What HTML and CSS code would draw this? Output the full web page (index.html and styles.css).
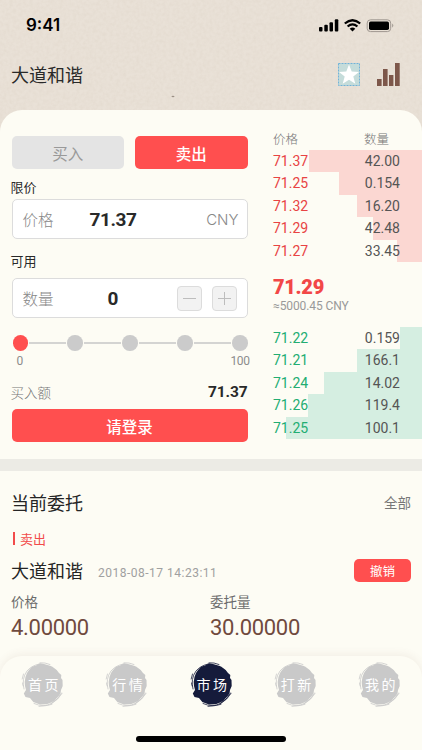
FILE: index.html
```html
<!DOCTYPE html>
<html lang="zh-CN">
<head>
    <meta charset="UTF-8">
    <meta name="viewport" content="width=device-width, initial-scale=1">
    <title>市场</title>
    <link rel="stylesheet" href="styles.css">
</head>
<body>
    <svg class="defs" width="0" height="0">
        <symbol id="ink" viewBox="0 0 44 46">
            <path fill="currentColor" d="M6 11 L8 8 L11 4.700 L15 3.500 L19 1.300 L23 2 L27.300 3.300 L31 4.500 L35.700 8 L38 11 L40.300 13 L40 16 L41.500 18 L41.700 24 L40 28 L39.600 31 L38.300 33.300 L35 37 L33.300 39 L29 41 L25.700 42.300 L19 42.500 L15 41 L12.300 40 L9 35.900 L4.500 35 L2.800 31.500 L5 28 L4 24 L3.700 20 L4.500 15 Z"/>
            <g fill="none" stroke="currentColor" stroke-linecap="round">
                <path stroke-width=".8" d="M3 27Q.3 17 6 9Q10 4 18 2M1.200 17L2.500 12M1.600 21L2.200 24"/>
                <path stroke-width=".8" d="M19 .8Q24 .3 29 2.500M13 41.500Q22 45.500 31 42.300M18 44.400Q33 44.500 41 31.500"/>
                <path stroke-width=".9" d="M30 41.600Q37 38 40.500 31"/>
            </g>
        </symbol>
    </svg>

    <div class="phone">
        <header class="header">
            <svg class="paper" width="422" height="140">
                <filter id="grain" x="0" y="0" width="100%" height="100%">
                    <feTurbulence type="fractalNoise" baseFrequency=".3" numOctaves="3" seed="4"/>
                    <feColorMatrix values="0 0 0 0 .55  0 0 0 0 .46  0 0 0 0 .36  .22 0 0 0 -.07"/>
                </filter>
                <rect width="422" height="140" filter="url(#grain)"/>
                <ellipse cx="173" cy="96.500" rx="1.500" ry=".8" fill="#9b9085"/>
            </svg>
            <div class="status-bar">
                <span class="time">9:41</span>
                <svg width="76" height="14" viewBox="0 0 76 14">
                    <rect x="0" y="8" width="3.500" height="4.500" rx="1"/>
                    <rect x="5.300" y="5.700" width="3.500" height="6.800" rx="1"/>
                    <rect x="10.500" y="3.200" width="3.500" height="9.300" rx="1"/>
                    <rect x="15.800" y=".3" width="3.500" height="12.200" rx="1"/>
                    <g fill="none" stroke="#000" stroke-width="2.300">
                        <path d="M25.800 4.500Q33.500-2.100 41.200 4.500"/>
                        <path d="M28.600 7.500Q33.500 3.300 38.400 7.500"/>
                    </g>
                    <path d="M30.700 9.700Q33.500 7.500 36.300 9.700L33.500 12.500Z"/>
                    <rect x="48.200" y=".8" width="23.500" height="11.800" rx="3.300" fill="none" stroke="#9f9790"/>
                    <rect x="50" y="2.500" width="20" height="8.400" rx="1.700"/>
                    <path d="M73.200 4.600Q75.500 6.600 73.200 8.700Z" fill="#9f9790"/>
                </svg>
            </div>
            <div class="title-bar">
                <h1>大道和谐</h1>
                <div class="tools">
                    <svg width="22" height="23" viewBox="0 0 22 23">
                        <rect x=".5" y=".5" width="21" height="22" fill="#c5dcda" stroke="#6fb3d9" stroke-dasharray="2 1"/>
                        <path fill="#fff" d="M11 1.500L13.700 8.500L21 8.900L15.300 13.500L17.300 20.800L11 16.800L4.700 20.800L6.700 13.500L1 8.900L8.300 8.500Z"/>
                    </svg>
                    <svg width="23" height="23" viewBox="0 0 23 23" fill="#7d574a">
                        <path d="M0 16h4.600v7H0zM6 6h4.600v17H6zM12 12h4.400v11H12zM18 0h4.700v23H18z"/>
                    </svg>
                </div>
            </div>
        </header>

        <main class="sheet">
            <section class="trade">
                <div class="form">
                    <div class="sides">
                        <button class="side">买入</button>
                        <button class="side active">卖出</button>
                    </div>
                    <label class="label">限价</label>
                    <div class="field price-field">
                        <span class="name">价格</span>
                        <b class="num">71.37</b>
                        <span class="unit">CNY</span>
                    </div>
                    <label class="label available">可用</label>
                    <div class="field amount-field">
                        <span class="name">数量</span>
                        <b class="num">0</b>
                        <div class="stepper">
                            <button class="step"><svg width="13" height="13"><path d="M0 6.500h13"/></svg></button>
                            <button class="step"><svg width="13" height="13"><path d="M0 6.500h13M6.500 0v13"/></svg></button>
                        </div>
                    </div>
                    <div class="slider">
                        <i class="dot on"></i><i class="line"></i><i class="dot"></i><i class="line"></i><i class="dot"></i><i class="line"></i><i class="dot"></i><i class="line"></i><i class="dot"></i>
                    </div>
                    <div class="scale num"><span>0</span><span>100</span></div>
                    <div class="total"><span>买入额</span><b class="num">71.37</b></div>
                    <button class="submit">请登录</button>
                </div>

                <div class="book">
                    <div class="book-head"><span>价格</span><span>数量</span></div>
                    <div class="rows sell num">
                        <div class="row"><i class="depth" style="width:113px"></i><span>71.37</span><span>42.00</span></div>
                        <div class="row"><i class="depth" style="width:83px"></i><span>71.25</span><span>0.154</span></div>
                        <div class="row"><i class="depth" style="width:65px"></i><span>71.32</span><span>16.20</span></div>
                        <div class="row"><i class="depth" style="width:49px"></i><span>71.29</span><span>42.48</span></div>
                        <div class="row"><i class="depth" style="width:25px"></i><span>71.27</span><span>33.45</span></div>
                    </div>
                    <div class="last num">
                        <b>71.29</b>
                        <span>≈5000.45 CNY</span>
                    </div>
                    <div class="rows buy num">
                        <div class="row"><i class="depth" style="width:22px"></i><span>71.22</span><span>0.159</span></div>
                        <div class="row"><i class="depth" style="width:65px"></i><span>71.21</span><span>166.1</span></div>
                        <div class="row"><i class="depth" style="width:98px"></i><span>71.24</span><span>14.02</span></div>
                        <div class="row"><i class="depth" style="width:114px"></i><span>71.26</span><span>119.4</span></div>
                        <div class="row"><i class="depth" style="width:136px"></i><span>71.25</span><span>100.1</span></div>
                    </div>
                </div>
            </section>

            <section class="orders">
                <div class="orders-head"><h2>当前委托</h2><span>全部</span></div>
                <div class="tag">卖出</div>
                <div class="order-title">
                    <h2>大道和谐</h2>
                    <time class="num">2018-08-17 14:23:11</time>
                    <button class="cancel">撤销</button>
                </div>
                <div class="order-data">
                    <div><span>价格</span><strong class="num">4.00000</strong></div>
                    <div><span>委托量</span><strong class="num">30.00000</strong></div>
                </div>
            </section>
        </main>

        <nav class="tabs">
            <div class="tab-list">
                <a class="tab"><svg><use href="#ink"/></svg><span>首页</span></a>
                <a class="tab"><svg><use href="#ink"/></svg><span>行情</span></a>
                <a class="tab active"><svg><use href="#ink"/></svg><span>市场</span></a>
                <a class="tab"><svg><use href="#ink"/></svg><span>打新</span></a>
                <a class="tab"><svg><use href="#ink"/></svg><span>我的</span></a>
            </div>
            <div class="home-bar"></div>
        </nav>
    </div>
</body>
</html>
```
FILE: styles.css
```css
* {
    box-sizing: border-box;
}
body {
    margin: 0;
    font-family: "Noto Sans CJK SC", sans-serif;
    color: #292929;
    background: #fdfcf4;
}
h1, h2 {
    margin: 0;
    font-size: 18px;
    font-weight: 400;
    line-height: 26px;
}
button {
    padding: 0;
    border: none;
    border-radius: 5px;
    font-family: inherit;
    color: #fff;
    background: #ff4f4f;
}
svg {
    display: block;
}
.defs {
    position: absolute;
}
.num {
    font-family: Roboto, "Noto Sans CJK SC", sans-serif;
}
.phone {
    width: 422px;
    height: 750px;
    overflow: hidden;
    display: flex;
    flex-direction: column;
    background: #fdfcf4;
}

/* header, runs on under the rounded corners of the sheet */
.header {
    position: relative;
    height: 140px;
    flex: none;
    background: #e9e1d7;
}
.paper {
    position: absolute;
    top: 0;
    left: 0;
}
.status-bar {
    position: relative;
    display: flex;
    justify-content: space-between;
    align-items: center;
    height: 50px;
    padding: 0 27px 0 26px;
}
.status-bar svg {
    margin-top: 1px;
}
.time {
    font: 600 17px/20px Inter, sans-serif;
    color: #000;
}
.title-bar {
    position: relative;
    display: flex;
    justify-content: space-between;
    align-items: center;
    height: 49px;
    padding: 0 22px 0 11px;
}
.title-bar h1 {
    margin-top: -2px;
}
.tools {
    display: flex;
    gap: 17px;
}

.sheet {
    position: relative;
    flex: none;
    height: 546px;
    margin-top: -30px;
    border-radius: 22px 22px 0 0;
    background: #fdfcf4;
}

/* order form */
.trade {
    display: flex;
    justify-content: space-between;
    height: 361px;
    border-bottom: 12px solid #ecebe5;
}
.form {
    width: 247.5px;
    padding: 26px 0 0 11.5px;
    display: flex;
    flex-direction: column;
}
.sides {
    display: flex;
    gap: 11px;
}
.side {
    flex: 1;
    height: 33px;
    font-size: 15.5px;
    color: #999;
    background: #e4e4e4;
}
.side.active {
    font-weight: 500;
    color: #fff;
    background: #ff4f4f;
}
.label {
    height: 30px;
    padding-top: 8px;
    margin-left: -1px;
    font-size: 13px;
    line-height: 20px;
}
.available {
    height: 39px;
    padding-top: 12px;
}
.field {
    display: flex;
    align-items: center;
    height: 40px;
    padding: 0 10px;
    border: 1px solid #dcdcdc;
    border-radius: 5px;
    background: #fff;
}
.field .name {
    width: 67px;
    font-size: 15.5px;
    font-weight: 300;
    color: #888;
}
.field .num {
    font-size: 19px;
    letter-spacing: -.4px;
}
.field .unit {
    margin-left: auto;
    margin-right: -2px;
    font: 300 15px Inter, sans-serif;
    color: #888;
}
.amount-field .name {
    width: 85px;
}
.stepper {
    display: flex;
    gap: 10px;
    margin-left: auto;
}
.step {
    display: flex;
    align-items: center;
    justify-content: center;
    width: 25px;
    height: 25px;
    border: 1px solid #dcdcdc;
    border-radius: 4px;
    background: #f2f2f2;
}
.step svg {
    stroke: #bdbdbd;
    stroke-width: 1px;
}
.slider {
    display: flex;
    align-items: center;
    gap: 1px;
    margin: 17px 0 0 1px;
}
.dot {
    width: 15.5px;
    height: 15.5px;
    border-radius: 50%;
    background: #cbcbcb;
}
.dot.on {
    background: #ff4f4f;
}
.line {
    flex: 1;
    height: 2px;
    background: #d4d4d2;
}
.scale {
    display: flex;
    justify-content: space-between;
    margin: 2px -2px 0 5px;
    font-size: 12px;
    line-height: 16px;
    letter-spacing: -.4px;
    color: #8c8c8c;
}
.total {
    display: flex;
    justify-content: space-between;
    align-items: center;
    height: 20px;
    margin-top: 13px;
    margin-left: -1px;
    font-size: 13.5px;
    font-weight: 300;
    color: #777;
}
.total b {
    font-size: 15.5px;
    font-weight: 700;
    letter-spacing: -.1px;
    color: #292929;
}
.submit {
    flex: none;
    height: 33px;
    margin-top: 7.5px;
    font-size: 15.5px;
    font-weight: 500;
}

/* order book */
.book {
    width: 149px;
    padding-top: 18px;
}
.book-head {
    display: flex;
    height: 22px;
    font-size: 12.5px;
    line-height: 21px;
    font-weight: 300;
    color: #777;
}
.book-head span:first-child {
    width: 91px;
}
.row {
    position: relative;
    display: flex;
    height: 22.4px;
    font-size: 14px;
    line-height: 23px;
}
.row span {
    position: relative;
    width: 91px;
    color: #555;
}
.row span:last-child {
    width: 36px;
    text-align: right;
}
.row .depth {
    position: absolute;
    top: 0;
    right: 0;
    height: 100%;
}
.sell .depth {
    background: #fbd7d2;
}
.sell .depth + span {
    color: #e84343;
}
.buy .depth {
    background: #d5eee1;
}
.buy .depth + span {
    color: #22ad72;
}
.last {
    height: 65px;
    padding-top: 13px;
    color: #999;
}
.last b {
    display: block;
    font-size: 20px;
    font-weight: 900;
    line-height: 24px;
    letter-spacing: -.3px;
    color: #f24747;
}
.last span {
    display: block;
    font-size: 12px;
    line-height: 15px;
    letter-spacing: -.1px;
}

/* current orders */
.orders {
    padding: 18px 11px 0;
}
.orders h2 {
    color: #252525;
}
.orders-head {
    display: flex;
    justify-content: space-between;
    align-items: center;
    font-size: 13.5px;
    color: #777;
}
.tag {
    display: flex;
    align-items: center;
    gap: 5px;
    height: 20px;
    margin: 13px 0 0 2px;
    font-size: 13px;
    color: #f24b4b;
}
.tag::before {
    content: "";
    width: 2px;
    height: 13px;
    background: #f24b4b;
}
.order-title {
    display: flex;
    align-items: center;
    height: 26px;
    margin-top: 9px;
}
.order-title time {
    margin: 6px 0 0 15px;
    font-size: 12px;
    letter-spacing: .5px;
    color: #a0a0a0;
}
.cancel {
    width: 57px;
    height: 23px;
    margin-left: auto;
    font-size: 12.5px;
}
.order-data {
    display: flex;
    margin-top: 8px;
}
.order-data div {
    width: 199px;
}
.order-data span {
    display: block;
    font-size: 13.5px;
    line-height: 20px;
    color: #6c6c6c;
}
.order-data strong {
    display: block;
    margin-top: 4px;
    font-size: 22px;
    line-height: 26px;
    font-weight: 400;
    letter-spacing: -.3px;
    color: #704a3e;
}

/* bottom tabs */
.tabs {
    position: relative;
    height: 94px;
    border-radius: 22px 22px 0 0;
    background: #fdfcf4;
    box-shadow: 0 -2px 8px rgba(110, 80, 60, .08);
}
.tab-list {
    display: flex;
    justify-content: space-between;
    padding: 6px 20px 0 21px;
}
.tab {
    position: relative;
    width: 44px;
    height: 46px;
    color: #c9c9c9;
}
.tab svg {
    width: 44px;
    height: 46px;
}
.tab span {
    position: absolute;
    top: 12px;
    left: 7px;
    font-family: KaiTi, STKaiti, "Noto Sans CJK SC", sans-serif;
    font-size: 14px;
    line-height: 20px;
    letter-spacing: 2.5px;
    white-space: nowrap;
    color: #fff;
}
.tab.active {
    color: #151b3b;
}
.home-bar {
    width: 150px;
    height: 6px;
    margin: 28px auto 0;
    border-radius: 3px;
    background: #000;
}
```
